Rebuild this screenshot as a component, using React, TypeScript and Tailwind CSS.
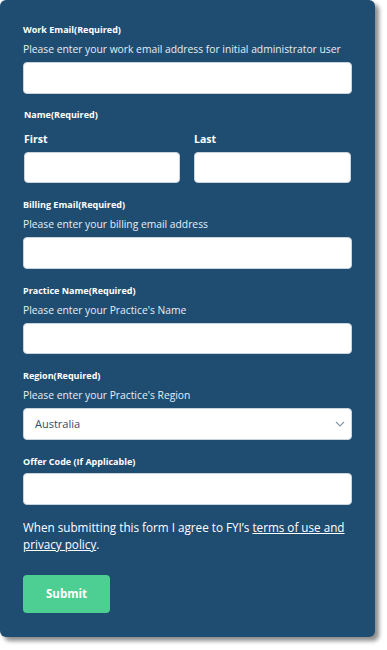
import React from "react";

const font = { fontFamily: '"Open Sans", "DejaVu Sans", sans-serif' };

function Input({ className = "" }: { className?: string }) {
  return (
    <div className={`rounded-[4px] bg-white border border-[#c9d3dc] ${className}`} />
  );
}

export default function App() {
  return (
    <div className="w-[387px] h-[650px] bg-white" style={font}>
      <div className="w-[375px] h-[637px] bg-[#1f4d72] rounded-[6px] shadow-[4px_4px_4px_rgba(0,0,0,0.45)] pt-[24px] px-[23px] text-white">
        <div className="text-[9px] font-bold leading-[12px]">Work Email(Required)</div>
        <div className="mt-[6px] text-[10.3px] leading-[14px] text-[#e6edf3] whitespace-nowrap">Please enter your work email address for initial administrator user</div>
        <Input className="mt-[6px] w-[329px] h-[32px]" />

        <div className="mt-[15px] ml-[1px] text-[9px] font-bold leading-[12px]">Name(Required)</div>
        <div className="mt-[11px] flex gap-[14px] ml-[1px]">
          <div className="w-[156px]">
            <div className="text-[10.5px] font-bold leading-[14px]">First</div>
            <Input className="mt-[6px] h-[31px]" />
          </div>
          <div className="w-[157px]">
            <div className="text-[10.5px] font-bold leading-[14px]">Last</div>
            <Input className="mt-[6px] h-[31px]" />
          </div>
        </div>

        <div className="mt-[16px] text-[9px] font-bold leading-[12px]">Billing Email(Required)</div>
        <div className="mt-[6px] text-[10.3px] leading-[14px] text-[#e6edf3]">Please enter your billing email address</div>
        <Input className="mt-[6px] w-[329px] h-[32px]" />

        <div className="mt-[16px] text-[9px] font-bold leading-[12px]">Practice Name(Required)</div>
        <div className="mt-[6px] text-[10.3px] leading-[14px] text-[#e6edf3]">Please enter your Practice's Name</div>
        <Input className="mt-[6px] w-[329px] h-[31px]" />

        <div className="mt-[16px] text-[9px] font-bold leading-[12px]">Region(Required)</div>
        <div className="mt-[6px] text-[10.3px] leading-[14px] text-[#e6edf3]">Please enter your Practice's Region</div>
        <div className="mt-[6px] w-[329px] h-[32px] rounded-[4px] bg-white border border-[#c9d3dc] flex items-center justify-between pl-[11px] pr-[6px]">
          <span className="text-[11px] text-[#2f4f6a]">Australia</span>
          <svg width="10" height="6" viewBox="0 0 10 6" fill="none">
            <path d="M1 1l4 4 4-4" stroke="#8a99a8" strokeWidth="1.2" />
          </svg>
        </div>

        <div className="mt-[16px] text-[9px] font-bold leading-[12px]">Offer Code (If Applicable)</div>
        <Input className="mt-[5px] w-[329px] h-[32px]" />

        <div className="mt-[14px] text-[11.7px] leading-[17px] w-[340px]">
          <div>
            When submitting this form I agree to FYI’s <span className="underline">terms of use and</span>
          </div>
          <div>
            <span className="underline">privacy policy</span>.
          </div>
        </div>

        <button className="mt-[22px] w-[87px] h-[38px] rounded-[4px] bg-[#4dcf93] text-white text-[11.5px] font-bold">
          Submit
        </button>
      </div>
    </div>
  );
}
